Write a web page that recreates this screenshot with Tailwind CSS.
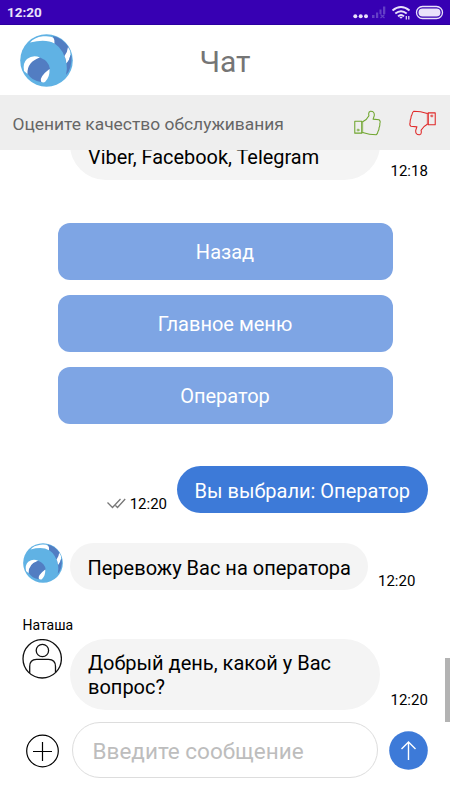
<!DOCTYPE html>
<html lang="ru">
<head>
<meta charset="utf-8">
<title>Чат</title>
<script src="https://cdn.jsdelivr.net/npm/@tailwindcss/browser@4"></script>
</head>
<body class="bg-white">
<svg class="hidden">
  <symbol id="logo" viewBox="0 0 53 53">
    <circle cx="26.500" cy="26.500" r="26.300" fill="#60b2e4"/>
    <path d="M33 2Q43 4 49 14L46.500 30Q44.500 16 34 9Z" fill="#527dc2"/>
    <path d="M10 8.500Q14 3.500 23 2.300Q31 1.600 33.500 4Q35 6 34.500 9.500Q26 4.500 10 8.500Z" fill="#fff"/>
    <path d="M48 13Q51 17 50.500 21Q49.500 26 46.500 29.500Q46 25 44.500 22Q47.500 18 48 13Z" fill="#fff"/>
    <path d="M51.500 22Q52 35 46 41Q47.500 35 46.500 29.500Q49.500 26.500 50.500 21Z" fill="#527dc2"/>
    <path d="M4 37Q2.500 29 7 25Q13 20.500 20 23.500Q10 28 7.500 40Z" fill="#fff"/>
    <path d="M20 23.500Q29 27 30 35Q22 40 21 48Q12 47 7.500 39.500Q7 28 20 23.500Z" fill="#527dc2"/>
    <path d="M29.500 35Q30 43 25 48Q23 49 21 47.500Q19 43 29.500 35Z" fill="#fff"/>
  </symbol>
  <symbol id="thumb" viewBox="0 0 28 26">
    <g fill="none" stroke="currentColor" stroke-width="1.100" stroke-linejoin="round" stroke-linecap="round">
      <path d="M.8 11.200H8V23.500H.8Z"/>
      <path d="M9 11.800Q13.500 9.500 15.500 5.500Q14.500 1.500 17 .8Q21.500 .5 21 5.500L19.800 9L26 9.600Q27.800 11 26.800 13.500Q27 16 26 18Q26 20.500 25 21.500Q24.500 24.500 23 25.200Q16 25.200 9 22.800"/>
      <path d="M9 11.800V23.200" stroke-width=".7"/>
      <circle cx="4.200" cy="20.300" r="1" stroke-width=".8"/>
    </g>
  </symbol>
</svg>
<div class="relative flex h-[800px] w-[450px] flex-col overflow-hidden bg-white font-['Roboto','Noto_Sans',sans-serif] text-black">
  <div class="flex h-[25px] shrink-0 items-center justify-between border-b border-[#2c00a0] bg-[#3700b3] pl-[7px] pr-[6px]">
    <span class="pt-px text-[13.500px] font-bold text-[#e9e2fa]">12:20</span>
    <svg class="h-[24px] w-[94px]" viewBox="350 0 94 24">
      <g fill="#e9e2fa"><circle cx="355.300" cy="16.300" r="2"/><circle cx="360.700" cy="16.300" r="2"/><circle cx="366" cy="16.300" r="2"/></g>
      <g fill="#6440c6"><path d="M372 15h2.500v3H372zM376 12.500h2.200V18H376zM379.500 9.500h2V14h-2zM383 6.500h2.300V14H383z"/><path d="M380.500 14.500l4 3.500m0-3.500l-4 3.500" stroke="#6440c6" stroke-width="1.200"/></g>
      <g fill="none" stroke="#e9e2fa" stroke-width="1.900"><path d="M392.500 10.500Q401 3.500 409.500 10.500M395.300 13.600Q401 8.800 406.700 13.600M398 16.400Q401 13.800 404 16.400"/><path d="M406.300 16v3.500m2.500-3.500v3.500" stroke-width="1.200"/></g>
      <path d="M399 16.700h4l-2 2z" fill="#e9e2fa"/>
      <rect x="416.500" y="6.500" width="26" height="12" rx="6" fill="none" stroke="#e9e2fa" stroke-width="1.300"/>
      <rect x="418.500" y="8.500" width="22" height="8" rx="4" fill="#e9e2fa"/>
    </svg>
  </div>
  <header class="grid h-[70px] shrink-0 grid-cols-[72px_1fr_72px] items-center">
    <svg class="ml-[20px] h-[53px] w-[53px]"><use href="#logo"/></svg>
    <h1 class="pt-[4px] text-center text-[30px] leading-none text-[#757575]">Чат</h1>
  </header>
  <div class="flex h-[55px] shrink-0 items-center bg-[#eee] pl-[12.500px]">
    <span class="grow pt-[3px] text-[17.400px] text-[#666]">Оцените качество обслуживания</span>
    <svg class="mr-[28px] h-[26px] w-[27px] text-[#6fa52e]"><use href="#thumb"/></svg>
    <svg class="mr-[14px] h-[26px] w-[27px] rotate-180 text-[#e02828]"><use href="#thumb"/></svg>
  </div>
  <main class="flex h-[563px] shrink-0 flex-col overflow-hidden">
    <div class="flex h-[30px] shrink-0 items-end pl-[70px]">
      <div class="flex h-[71px] w-[310px] items-end rounded-[36px] bg-[#f4f4f4] px-[18px] pb-[10px] text-[19.900px] leading-[24px]">Viber, Facebook, Telegram</div>
      <time class="ml-[10.500px] text-[15px] leading-[18px]">12:18</time>
    </div>
    <div class="ml-[57.500px] mt-[42.500px] flex w-[335px] shrink-0 flex-col gap-[15px] text-[20px] text-white">
      <button class="h-[57px] rounded-[12px] bg-[#7ea5e4] pt-[2px]">Назад</button>
      <button class="h-[57px] rounded-[12px] bg-[#7ea5e4] pt-[2px]">Главное меню</button>
      <button class="h-[57px] rounded-[12px] bg-[#7ea5e4] pt-[2px]">Оператор</button>
    </div>
    <div class="mr-[22.500px] mt-[42.500px] flex shrink-0 items-end justify-end">
      <svg class="mb-[4px] mr-[4px] h-[11px] w-[19px]" viewBox="0 0 19 11" fill="none" stroke="#777" stroke-width="1.300"><path d="M.5 4.500L5.500 9.500L13.500 1M8.500 7.500L10.500 9.500L18.200 1"/></svg>
      <time class="mr-[10px] text-[15px] leading-[18px]">12:20</time>
      <div class="h-[47px] w-[250.500px] whitespace-nowrap rounded-full bg-[#3d7ad8] pl-[17.500px] pt-[13px] text-[20px] leading-[24px] text-white">Вы выбрали: Оператор</div>
    </div>
    <div class="mt-[30px] flex shrink-0 items-end pl-[22.500px]">
      <svg class="mr-[7.500px] h-[40px] w-[40px] self-start"><use href="#logo"/></svg>
      <div class="h-[47px] w-[298px] whitespace-nowrap rounded-full bg-[#f4f4f4] pl-[17.500px] pt-[13px] text-[20px] leading-[24px]">Перевожу Вас на оператора</div>
      <time class="ml-[10px] text-[15px] leading-[18px]">12:20</time>
    </div>
    <div class="mt-[27px] h-[22px] shrink-0 pl-[22.500px] text-[14px] leading-[16px]">Наташа</div>
    <div class="flex shrink-0 items-end pl-[22px]">
      <svg class="mr-[8px] h-[40px] w-[40px] self-start" viewBox="0 0 40 40" fill="none" stroke="#111" stroke-width="1.300"><circle cx="20.200" cy="19.800" r="19.200"/><circle cx="20.400" cy="11.500" r="6.200"/><path d="M7.700 34V27.500Q7.700 20.300 14.500 20.300H26.500Q33.500 20.300 33.500 27.500V33.500"/></svg>
      <div class="h-[71px] w-[310px] rounded-[36px] bg-[#f4f4f4] pl-[18px] pt-[12px] text-[20px] leading-[24px]">Добрый день, какой у Вас<br>вопрос?</div>
      <time class="mb-px ml-[10.500px] text-[15px] leading-[18px]">12:20</time>
    </div>
  </main>
  <footer class="flex grow items-start pl-[26px] pt-[9px]">
    <svg class="mt-[12px] h-[34px] w-[33px]" viewBox="0 0 33 34" fill="none" stroke="#000" stroke-width="1.200"><circle cx="16.500" cy="17" r="15.800"/><path d="M7 17.500H26M16.500 8V27"/></svg>
    <div class="ml-[13px] h-[56px] w-[306px] rounded-full border border-[#ddd] pl-[19.500px] pt-[14px] text-[22.500px] leading-[28px] text-[#bdbdbd]">Введите сообщение</div>
    <svg class="ml-[11px] mt-[9px] h-[39px] w-[39px]" viewBox="0 0 39 39"><circle cx="19.500" cy="19.500" r="19.300" fill="#3d7ad8"/><path d="M19.500 29V11.500M12.500 18L19.500 11L26.500 18" fill="none" stroke="#fff" stroke-width="1.400"/></svg>
  </footer>
  <div class="absolute left-[445px] top-[658px] h-[64px] w-[5px] bg-[#b3b3b3]"></div>
</div>
</body>
</html>
